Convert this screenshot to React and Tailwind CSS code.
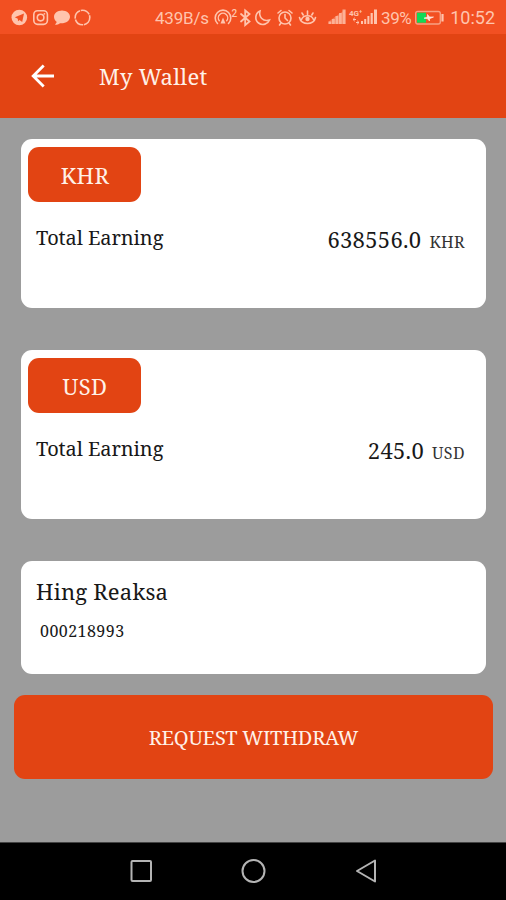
import React from 'react';

const wallets = [
  { currency: 'KHR', total: '638556.0' },
  { currency: 'USD', total: '245.0' },
];

function StatusBar() {
  return (
    <div className="flex h-[34px] items-center bg-[#f25022] pt-px pl-[11px] pr-[11px] text-[#ffc4ad] font-['Roboto',sans-serif]">
      <svg width="82" height="20" viewBox="0 0 82 20" fill="none" stroke="currentColor">
        {/* telegram */}
        <circle cx="8.3" cy="9.5" r="7.8" fill="currentColor" stroke="none" />
        <path d="M3.8 9.3 13 5.6 11.2 14 8.5 12 7 13.3 6.8 10.8Z" fill="#f25022" stroke="none" />
        {/* instagram */}
        <rect x="22.8" y="2.8" width="13.6" height="13.6" rx="3.8" strokeWidth="1.6" />
        <circle cx="29.6" cy="9.6" r="3.3" strokeWidth="1.6" />
        <circle cx="33.4" cy="5.8" r="0.9" fill="currentColor" stroke="none" />
        {/* chat bubble */}
        <path d="M51 2.5c-4.5 0-8 2.8-8 6.3 0 2.3 1.2 4 2.8 5.1L44 16.8c2 0 3.7-.5 5-1.5 5.7.5 10-2.5 10-6.5 0-3.5-3.5-6.3-8-6.3Z" fill="currentColor" stroke="none" />
        <circle cx="71.5" cy="9.5" r="7.3" strokeWidth="1.6" strokeDasharray="10 0.8" />
      </svg>
      <span className="ml-[62px] w-[55px] whitespace-nowrap text-[17px] leading-5 tracking-[-0.2px]">439B/s</span>
      <svg className="ml-[4px]" width="104" height="20" viewBox="0 0 104 20" fill="none" stroke="currentColor" strokeWidth="1.6" strokeLinecap="round">
        {/* hotspot */}
        <path d="M3.5 15.5A7.8 7.8 0 1 1 14.5 15.5" />
        <path d="M5.3 12.8A4.7 4.7 0 1 1 12.7 12.8" strokeWidth="1.4" />
        <path d="M9 9.5 6.5 15.5H11.5Z" fill="currentColor" stroke="none" />
        <text x="17.5" y="9" fontSize="10" fontWeight="500" fill="currentColor" stroke="none">2</text>
        {/* bluetooth */}
        <path d="M27 6 35.5 13.5 31.2 17V2.5L35.5 6 27 13.5" strokeWidth="1.8" />
        {/* moon */}
        <path d="M46 3C41 5 40.5 12 44.5 15 48.5 18 54 16 55.5 12 49 14 44.5 9 46 3Z" />
        {/* alarm */}
        <circle cx="71" cy="10" r="6" />
        <path d="M71 6.5V10L73.5 12.5M64 5 67 2.5M78 5 75 2.5M67 15 65.5 17M75 15 76.5 17" />
        {/* eye */}
        <path d="M85.5 9.5C87 17.5 100 17.5 101.500 9.5M87.5 11.5C89.5 6.5 97.5 6.5 99.5 11.5" />
        <circle cx="93.5" cy="11" r="2.2" fill="currentColor" stroke="none" />
        <path d="M93.5 3V6.5M88 5 89.2 7M99 5 97.8 7" />
      </svg>
      <svg className="ml-[10px]" width="50" height="20" viewBox="0 0 50 20" fill="currentColor">
        <path d="M0.500 16V13.5L17.5 1.5V16Z" opacity=".35" />
        <path d="M0.5 16H3.3V13.5H.5ZM4 16H6.8V11H4ZM7.5 16H10.3V8H7.5ZM11 16H13.8V5H11ZM14.5 16H17.5V1.5H14.5Z" opacity=".75" />
        <text x="21" y="7.5" fontSize="8" fontWeight="700">4G⁺</text>
        <path d="M25 11.500H28M25 11.500 26.800 9.800M25 11.500 26.800 13.200M28 14.500H31M31 14.500 29.200 12.800M31 14.500 29.200 16.200" stroke="currentColor" />
        <path d="M33 16H35V13H33ZM36.2 16H38.2V11H36.2ZM39.4 16H41.4V8H39.4ZM42.6 16H44.8V5H42.6ZM46 16H49V1.5H46Z" />
      </svg>
      <span className="ml-[3px] w-[32px] whitespace-nowrap text-[17px] leading-5 tracking-[-0.4px]">39%</span>
      <svg className="ml-[2px]" width="30" height="16" viewBox="0 0 30 16" fill="none">
        <rect x="0.7" y="1.5" width="24.6" height="12.5" rx="2" stroke="#f7a184" strokeWidth="1.4" />
        <rect x="2" y="2.7" width="9" height="10" fill="#12d957" />
        <path d="M9 8.200 12.500 7V4.500L14.500 7H18.500L14.500 8.700V11L12.500 8.700Z" fill="#ffe6dc" stroke="#ffe6dc" strokeWidth="0.700" />
        <path d="M27.5 4V11.5" stroke="#ffc4ad" strokeWidth="2.2" />
      </svg>
      <span className="ml-auto whitespace-nowrap text-[18px] leading-5">10:52</span>
    </div>
  );
}

function Header() {
  return (
    <header className="flex h-[84px] items-center bg-[#e24413] pl-[31px] text-[#fff1e8]">
      <svg width="24" height="24" viewBox="0 0 24 24" fill="none" stroke="#fff" strokeWidth="2.8">
        <path d="M23 12H2.5M12.7 1.5 2.2 12 12.7 22.5" />
      </svg>
      <h1 className="ml-[44px] text-[22px] leading-[30px] tracking-[0.3px]">My Wallet</h1>
    </header>
  );
}

function WalletCard({ currency, total }) {
  return (
    <section className="h-[169px] rounded-[11px] bg-white pt-[8px] pr-[21px] pl-[7px]">
      <div className="flex h-[55px] w-[113px] items-center justify-center rounded-[11px] bg-[#e24413] pt-px pl-px text-[22px] tracking-[0.4px] text-[#fff1e8]">
        {currency}
      </div>
      <div className="mt-[21px] flex items-start justify-between pl-[8px] text-[#181818]">
        <span className="text-[20px] leading-[30px] tracking-[-0.1px]">Total Earning</span>
        <span className="flex items-baseline gap-[8px] pt-px leading-[30px]">
          <span className="text-[22px] tracking-[0.3px]">{total}</span>
          <span className="text-[16px] tracking-[0.4px] text-[#333]">{currency}</span>
        </span>
      </div>
    </section>
  );
}

export default function App() {
  return (
    <div className="flex h-[900px] w-[506px] flex-col overflow-hidden bg-[#9c9c9c] font-['Noto_Serif','DejaVu_Serif_Condensed','DejaVu_Serif',serif]">
      <StatusBar />
      <Header />

      <main className="flex flex-1 flex-col pt-[21px]">
        <div className="flex flex-col gap-[42px] pr-[20px] pl-[21px]">
          {wallets.map(w => (
            <WalletCard key={w.currency} currency={w.currency} total={w.total} />
          ))}

          <section className="h-[113px] rounded-[11px] bg-white pt-[15px] pl-[15px] text-[#181818]">
            <p className="text-[22px] leading-[30px] tracking-[0.2px]">Hing Reaksa</p>
            <p className="mt-[14px] pl-[4px] text-[16px] leading-[22px] tracking-[0.45px]">000218993</p>
          </section>
        </div>

        <button className="mt-[21px] mr-[13px] ml-[14px] h-[84px] rounded-[11px] bg-[#e24413] pt-[2px] text-[20px] tracking-[-0.2px] text-[#fff1e8]">
          REQUEST WITHDRAW
        </button>
      </main>

      <nav className="flex h-[58px] items-center border-t border-[#444] bg-black pb-[2px] pl-[130px]">
        <svg width="248" height="26" viewBox="0 0 248 26" fill="none" stroke="#b4b4b4" strokeWidth="2" strokeLinejoin="round">
          <rect x="1.5" y="3" width="19.5" height="20" rx="1" />
          <circle cx="123.5" cy="13" r="11" />
          <path d="M245 2.5V23.5L227 13Z" />
        </svg>
      </nav>
    </div>
  );
}
